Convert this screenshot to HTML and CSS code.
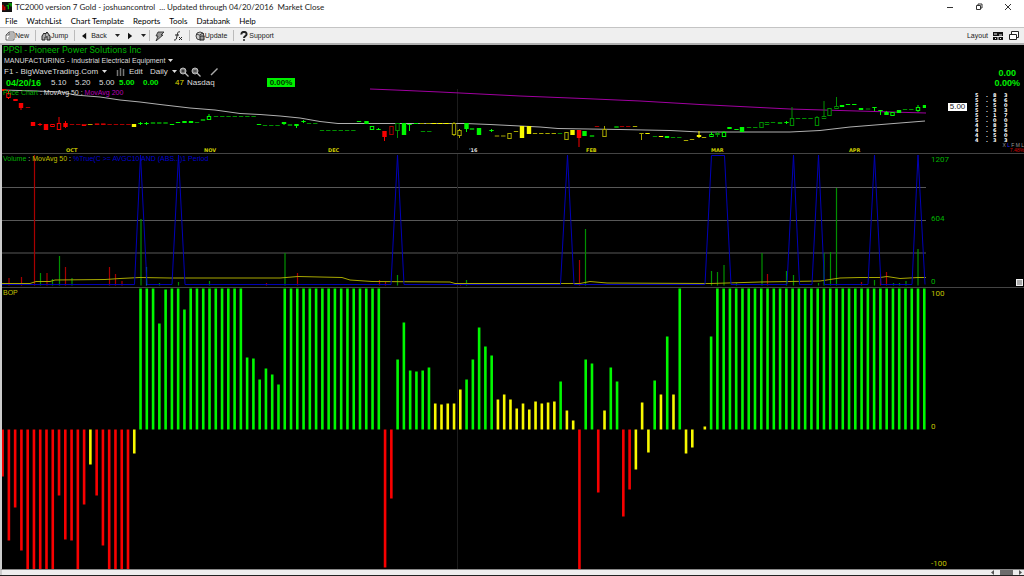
FILE: index.html
```html
<!DOCTYPE html>
<html lang="en">
<head>
<meta charset="utf-8">
<title>TC2000 version 7 Gold</title>
<link rel="stylesheet" href="styles.css">
</head>
<body>
<div class="app">
  <header class="titlebar">
    <svg class="logo" viewBox="0 0 11 11"><rect width="11" height="11" fill="#111"/><path d="M1 3v6M3 5v4" stroke="#e00" stroke-width="1.4"/><path d="M5 4h2v4M7 2h3v3" stroke="#0b0" stroke-width="1.4" fill="none"/></svg>
    <h1 class="title">TC2000 version 7 Gold - joshuancontrol &nbsp;... Updated through 04/20/2016 &nbsp;Market Close</h1>
    <div class="window-buttons">
      <button aria-label="Minimize"><svg viewBox="0 0 8 8"><path d="M1 4.5h6"/></svg></button>
      <button aria-label="Restore"><svg viewBox="0 0 8 8"><path d="M1.5 2.5h4v4h-4zM3 2.500V1h4v4H5.500"/></svg></button>
      <button aria-label="Close"><svg viewBox="0 0 8 8"><path d="M1 1l6 6M7 1L1 7"/></svg></button>
    </div>
  </header>
  <nav class="menu">
    <button>File</button><button>WatchList</button><button>Chart Template</button><button>Reports</button><button>Tools</button><button>Databank</button><button>Help</button>
  </nav>
  <div class="toolbar">
    <button class="group"><svg viewBox="0 0 10 10"><path d="M1 9V4l3-3h5v8zM4 1v3H1M4 3h4M4 5h4M3 7h5" fill="#fff" stroke="#444" stroke-width=".8"/></svg>New</button>
    <button class="group"><svg viewBox="0 0 10 10"><path d="M1 9V5l2-3 1 1 2-2 3 4v4H6V6H4v3z" fill="#aaa" stroke="#222"/><circle cx="6" cy="4" r="1.400" fill="#fff" stroke="#222" stroke-width=".7"/></svg>Jump</button>
    <div class="group history">
      <button class="back"><svg class="arrow" viewBox="0 0 6 8"><path d="M5 0v8L0 4z" fill="#111"/></svg>Back</button>
      <button aria-label="Back history"><svg class="caret" viewBox="0 0 5 3"><path d="M0 0h5L2.500 3z"/></svg></button>
      <button aria-label="Forward"><svg class="arrow" viewBox="0 0 6 8"><path d="M0 0v8L5 4z" fill="#111"/></svg></button>
      <button aria-label="Forward history"><svg class="caret" viewBox="0 0 5 3"><path d="M0 0h5L2.500 3z"/></svg></button>
    </div>
    <div class="group tools">
      <button aria-label="Draw"><svg viewBox="0 0 10 10"><path d="M3 1h6L6 4h2L1 10l2-5H1z" fill="#999" stroke="#222" stroke-width=".8"/></svg></button>
      <button aria-label="Formula"><svg viewBox="0 0 10 10"><path d="M7 1C5 0 4.500 2 4 5S3 9.500 1 9M2 4h4M6 6l3 3M9 6L6 9" fill="none" stroke="#222"/></svg></button>
    </div>
    <button class="group"><svg viewBox="0 0 10 10"><circle cx="5" cy="5" r="4" fill="#ccc" stroke="#444"/><path d="M1 4c2-2 3 1 4 0s2-2 4-1M5 5h4v4H5z" fill="#999" stroke="#222"/></svg>Update</button>
    <button class="group last"><svg viewBox="0 0 9 10"><path d="M2 3.500C1.500 0 7.500 0 7 3.500 7 5 4.500 5 4.500 7" fill="none" stroke="#222" stroke-width="2"/><circle cx="4.500" cy="9" r="1" fill="#222"/></svg>Support</button>
    <div class="layout-tools">
      <button>Layout <svg viewBox="0 0 10 8"><path d="M0 0h10v8H0z" fill="#111"/><path d="M0 4.500h10M5 4v4M1 2h3M6 3h3M2 6.500h1M7 6.500h1" stroke="#eee"/></svg></button>
      <button aria-label="Windows"><svg viewBox="0 0 10 10"><path d="M.5 3.500h7v5h-7zM2.500 3V.5h7v6h-2" fill="#fff" stroke="#222"/></svg></button>
    </div>
  </div>

  <main class="workspace">
    <section class="symbol">
      <div class="info">
        <h2 class="name">PPSI - Pioneer Power Solutions Inc</h2>
        <button class="sector">MANUFACTURING - Industrial Electrical Equipment <svg class="caret" viewBox="0 0 5 3"><path d="M0 0h5L2.500 3z"/></svg></button>
        <div class="controls">
          <button class="watch">F1 - BigWaveTrading.Com <svg class="caret" viewBox="0 0 5 3"><path d="M0 0h5L2.500 3z"/></svg></button>
          <button class="edit"><svg viewBox="0 0 9 8"><path d="M1.500 2v6M4.500 0v8M7.500 1v7" stroke="#777" stroke-width="1.500"/></svg>Edit</button>
          <button class="period">Daily <svg class="caret" viewBox="0 0 5 3"><path d="M0 0h5L2.500 3z"/></svg></button>
          <button aria-label="Zoom in"><svg class="lens" viewBox="0 0 10 10"><circle cx="4" cy="4" r="3" fill="#888" stroke="#bbb"/><path d="M2.500 4h3M4 2.500v3" stroke="#222"/><path d="M6 6l3.500 3.500" stroke="#bbb" stroke-width="1.300"/></svg></button>
          <button aria-label="Zoom out"><svg class="lens" viewBox="0 0 10 10"><circle cx="4" cy="4" r="3" fill="#888" stroke="#bbb"/><path d="M2.500 4h3" stroke="#222"/><path d="M6 6l3.500 3.500" stroke="#bbb" stroke-width="1.300"/></svg></button>
          <button class="pencil" aria-label="Draw line"><svg class="lens" viewBox="0 0 10 10"><path d="M2 8L8.500 1.500" stroke="#aaa" stroke-width="1.400"/></svg></button>
        </div>
        <div class="quote">
          <b class="date">04/20/16</b><span>5.10</span><span>5.20</span><span class="low">5.00</span><b>5.00</b><b>0.00</b><span class="rank">47</span><span class="market">Nasdaq</span><b class="badge">0.00%</b>
        </div>
      </div>
      <div class="change"><b>0.00</b><b>0.00%</b></div>
    </section>

    <section class="pane price">
      <div class="plot">
        <svg id="price" viewBox="2 88 924 65" preserveAspectRatio="none"></svg>
        <p class="legend"><span class="green">Price Chart</span> <span class="white">: MovAvg 50 :</span> <span class="magenta">MovAvg 200</span></p>
        <div class="months"><span>OCT</span><span>NOV</span><span>DEC</span><span class="year">'16</span><span>FEB</span><span>MAR</span><span>APR</span></div>
      </div>
      <div class="axis">
        <span class="tag">5.00</span>
        <div class="scale" id="scale"></div>
        <div class="modes"><span>X <i>L</i> F M L</span><span class="red">7.48%</span></div>
      </div>
    </section>

    <section class="pane volume">
      <div class="plot">
        <svg id="volume" viewBox="2 154 924 133" preserveAspectRatio="none"></svg>
        <p class="legend"><span class="green">Volume</span> <span class="white">:</span> <span class="yellow">MovAvg 50</span> <span class="white">:</span> <span class="blue">%True(C &gt;= AVGC10 AND (ABS...)1 Period</span></p>
      </div>
      <div class="axis levels green"><span>1207</span><span>604</span><span>0</span><button class="resize" aria-label="Resize pane"></button></div>
    </section>

    <section class="pane bop">
      <div class="plot">
        <svg id="bop" viewBox="2 288 924 281" preserveAspectRatio="none"></svg>
        <p class="legend yellow">BOP</p>
      </div>
      <div class="axis levels yellow"><span>100</span><span>0</span><span>-100</span></div>
    </section>
  </main>
  <footer class="scrollbar">
    <button aria-label="Scroll left"><svg viewBox="0 0 6 5"><path d="M4 0v5L1 2.500z"/></svg></button>
    <div class="thumb"></div>
    <button aria-label="Scroll right"><svg viewBox="0 0 6 5"><path d="M2 0v5l3-2.500z"/></svg></button>
  </footer>
</div>
<script src="chart.js"></script>
</body>
</html>
```
FILE: styles.css
```css
* { box-sizing: border-box; }
body { margin: 0; background: #000; font: 8px/10px "Liberation Sans", sans-serif; color: #222; }
h1, h2, p { margin: 0; font: inherit; }
button { border: 0; padding: 0; margin: 0; background: none; font: inherit; color: inherit; display: flex; align-items: center; white-space: nowrap; }
svg { display: block; }
.app { height: 100vh; display: flex; flex-direction: column; background: #fff; border-bottom: 1px solid #222; overflow: hidden; }
.titlebar { height: 14px; flex: none; display: flex; align-items: center; padding: 0 12px 0 2px; font-family: Lato, sans-serif; }
.logo { width: 10px; height: 10px; margin-right: 3px; }
.title { flex: 1; font-size: 8px; white-space: pre; }
.window-buttons { display: flex; gap: 21px; }
.window-buttons svg { width: 8px; height: 8px; fill: none; stroke: #333; stroke-width: 1; }
.menu { height: 13px; flex: none; display: flex; align-items: center; gap: 9px; padding-left: 5px; font-family: Lato, sans-serif; color: #000; }
.toolbar { height: 18px; flex: none; display: flex; align-items: center; padding: 0 5px; background: #efefef; border-top: 1px solid #c4c4c4; border-bottom: 2px solid #b0b0b0; font-size: 7px; }
.toolbar svg { width: 10px; height: 10px; }
.group { height: 11px; display: flex; align-items: center; padding-right: 6px; margin-right: 5px; border-right: 1px solid #bbb; }
.group.last { border: 0; }
.toolbar .arrow { width: 5px; height: 8px; }
.caret, .toolbar .caret { width: 5px; height: 3px; fill: currentColor; }
.back { gap: 4px; }
.history { gap: 8px; padding-left: 2px; padding-right: 3px; }
.tools { gap: 8px; }
.layout-tools { margin-left: auto; display: flex; align-items: center; gap: 6px; }
.layout-tools button { gap: 5px; }

.workspace { flex: 1; min-height: 0; display: flex; flex-direction: column; background: #000; border-left: 2px solid #ccc; }
.symbol { flex: none; height: 43px; display: flex; justify-content: space-between; color: #ddd; }
.info { padding-left: 1px; }
.name { font-family: Roboto, sans-serif; font-size: 9px; line-height: 10px; color: #00b000; }
.sector { height: 11px; gap: 3px; padding-left: 1px; font-size: 7px; }
.controls { height: 11px; display: flex; align-items: center; padding-left: 1px; font-size: 8px; gap: 2px; }
.controls button { gap: 4px; }
.watch { width: 110px; }
.edit svg { width: 9px; height: 8px; }
.edit { width: 32px; }
.lens { width: 10px; height: 10px; }
.controls .pencil { margin-left: 6px; }
.quote { height: 11px; display: flex; align-items: center; padding-left: 3px; }
.quote > * { width: 24px; }
.quote b { color: #00f000; font-size: 8px; }
.quote .date { width: 45px; font-size: 9px; }
.quote .low { width: 20px; }
.quote .rank { width: 12px; margin-left: 8px; color: #dd0; }
.quote .market { width: 80px; }
.quote .badge { width: 28px; line-height: 9px; text-align: center; background: #00f000; color: #030; }
.change { display: flex; flex-direction: column; align-items: center; padding: 23px 4px 0 0; font-size: 9px; color: #00f000; }

.pane { min-height: 0; display: flex; border-bottom: 1px solid #444; }
.price { flex: 65 1 0; }
.volume { flex: 133 1 0; }
.bop { flex: 281 1 0; border: 0; }
.plot { flex: 1; min-width: 0; position: relative; }
.plot svg { position: absolute; width: 100%; height: 100%; }
.axis { flex: none; width: 98px; position: relative; }
.legend { position: absolute; left: 1px; top: 0; font-size: 7px; line-height: 9px; white-space: nowrap; }
.green { color: #00b400; }
.white { color: #ddd; }
.magenta { color: #b800b8; }
.yellow { color: #c0c000; }
.blue { color: #0000d0; }
.red { color: #d00000; }
.months { position: absolute; left: 0; right: 0; bottom: 0; height: 6px; padding-left: 64px; display: grid; grid-template-columns: 138fr 124fr 141fr 117fr 125fr 138fr 77fr; font: bold 5px/6px "DejaVu Sans", sans-serif; color: #cc0; }
.months .year { color: #ddd; }
.price .axis { display: flex; justify-content: flex-end; }
.tag { position: absolute; left: 22px; top: 15px; width: 19px; background: #fff; color: #222; line-height: 8px; text-align: center; }
.scale { width: 38px; margin-right: 11px; padding-top: 5px; font: bold 5px/5px "DejaVu Sans", sans-serif; color: #fff; }
.scale div { display: grid; grid-template-columns: 11px 7px 11px 9px; }
.modes { position: absolute; right: 0; bottom: 0; text-align: right; font-size: 5px; line-height: 5px; color: #999; display: flex; flex-direction: column; }
.modes i { font-style: normal; color: #22f; }
.levels { display: flex; flex-direction: column; justify-content: space-between; padding: 1px 0 0 5px; font-family: Roboto, sans-serif; }
.levels span:nth-child(2) { padding-bottom: 5px; }
.resize { position: absolute; right: 1px; bottom: 1px; width: 7px; height: 7px; background: #aaa; border: 1px solid #eee; }

.scrollbar { flex: none; height: 6px; display: flex; justify-content: flex-end; align-items: stretch; gap: 4px; background: #eee; border-top: 1px solid #888; border-left: 2px solid #ccc; padding-right: 1px; }
.scrollbar svg { width: 6px; height: 5px; fill: #555; }
.thumb { width: 13px; background: #6c6c6c; }
```
FILE: chart.js
```js
const NS = "http://www.w3.org/2000/svg";
const G = "#00f800", DG = "#009000", R = "#f80000", DR = "#a80000", Y = "#f8f800", DY = "#a8a800";

function add(id, tag, attrs) {
  const el = document.createElementNS(NS, tag);
  for (const k in attrs) el.setAttribute(k, attrs[k]);
  document.getElementById(id).appendChild(el);
}
const rect = (id, x, y, width, height, fill) => add(id, "rect", { x, y, width, height, fill });
const line = (id, points, stroke, w = 1) => add(id, "polyline", { points, stroke, fill: "none", "stroke-width": w });

// Balance of power: one bar per session, g/r/y colour followed by signed length
const full = (n) => Array(n).fill("g141");
const bars = [
  ..."r-47 r-111 r-78 r-121 r-140 r-140 r-140 r-140 r-140 r-66 r-110 r-111 r-140 r-75 y-35 r-66 r-116 r-140 r-140 r-140 r-140 y-24".split(" "),
  ...full(3), "g106", "g140", ...full(2), "g120", ...full(9),
  ..."g72 g71 g50 g61 g55 g45".split(" "), ...full(16),
  ..."r-138 r-69 g70 g107 g59 g58 g59 g62 y26 y25 y26 y26 y40 g50 g70 g102 g83 g74 y30 y35 y30 y21 y26 y20 y28 y26 y27 y28 g48 y19 y9 r-140 g70 g66 r-63 y19 g62 g48 r-87 r-60 y-40 y27 y-23 g49 y35 g93 y35 g141 y-24 y-18 y0 y3 g93".split(" "),
  ...full(35)
];
line("bop", "457.5,288 457.5,569", "#1c1c1c");
bars.forEach((b, i) => {
  const v = +b.slice(1), x = 2.6 + 6.27 * i;
  rect("bop", x - 1.3, v > 0 ? 429.5 - v : 429.5, 2.6, Math.abs(v), { g: G, r: R, y: Y }[b[0]]);
});

// Volume
[187.5, 220.5, 253].forEach((y) => line("volume", `2,${y} 926,${y}`, "#585858"));
line("volume", "457.5,154 457.5,287", "#1c1c1c");
const vol = {
  [DR]: [[9,278],[21.5,277],[34.5,155],[47,273],[65.5,267],[109.5,267],[115.5,274],[122,281],[266.5,283],[297.5,273],[379.5,280],[385.5,282],[460.5,283],[579.5,260],[767.5,274],[861.5,282],[880.5,274],[886.5,272]],
  [DG]: [[40.5,273],[52.5,279],[59.5,256],[72,278],[141,219],[159.5,283],[178.5,282],[209.5,281],[285,253],[397.5,275],[466.5,280],[585.5,229],[711.5,271],[717.5,272],[724,265],[736.5,283],[762,253],[786.5,271],[793.5,275],[818.5,283],[824,253],[830.5,252],[836.500,188],[874.5,280],[893.5,283],[899.5,283],[906,281],[918,249]],
  "#008888": [[146.5,267]]
};
for (const c in vol) vol[c].forEach(([x, y]) => rect("volume", x - 0.6, y, 1.2, 285.5 - y, c));
line("volume", "2,283.5 30,283.5 36,281.5 50,281.5 55,280 105,279.5 120,278.500 140,277.5 170,278 280,278 298,276.5 342,277.5 350,280 372,281.5 450,282 455,283.5 580,283.500 590,281.5 607,283 711,283.5 760,282 820,281 840,278 860,277.500 880,277.5 887,276.5 900,278.5 918,277.5 926,277.5", "#a8a800");
line("volume", "2,284.5 134.5,284.5 140.5,155 147,284.5 172,284.500 178.5,155 185,284.5 391,284.5 397.5,155 404,284.5 560.5,284.5 567.5,155 574,284.5 705,284.5 711.5,155.5 724.5,155.5 731,284.5 787,284.5 793.5,155 799.500,284.5 812,284.5 818.500,155 824.5,284.5 868,284.5 874.5,155 881,284.5 912,284.5 918,155 925,284.5", "#0000b8");

// Price: [centre x, body top, body height, kind, colour, wick top, wick bottom]; kinds: s solid, h hollow
line("price", "457.5,89 457.5,150", "#1c1c1c");
line("price", "2,90 36,91 62,92 75,95 100,97 120,100 140,102 160,104.5 190,108 215,110 240,113.5 260,114.500 280,116 300,118 320,121.5 338,123.5 465,123.5 490,124.5 510,125.5 540,127 558,128.5 620,129.5 670,130.5 700,132 790,132 820,130.5 850,127 875,125 900,123 925,121", "#b0b0b0");
line("price", "370,89 395,90 440,92 470,93.5 520,96 583,98.5 640,101 700,104.5 790,109 840,110.5 926,113", "#a000a0");
const candles = [
  [4,89,2,"s",R],[8.5,93,4,"h",R,90,99],[15.5,99,2,"s",R],[21,103,5,"s",R,103,110],[33,122,4,"s",R],[40,124,1,"s",R,123,126],[46,124,6,"s",R],[52.5,124,2,"h",R],[59,123,6,"h",R,117,130],[65.5,123,4,"s",R,121,128],
  [84,124,2,"s",R],[134,124,3,"s",Y],[140.5,123,1,"s",G,122,125],[146.5,123,1,"s",G,122,125],[184.5,121,2,"s",G],[191,121,2,"s",G],[203,119,2,"s",DG],[209,116,3,"h",G,114,119],
  [284,122,2,"s",G,122,125],[296.5,124,2,"s",G,124,128],[303.5,121,1,"s",G,120,123],[259,124,1,"s",G],[359,121,1,"s",G],[366.5,121,3,"s",G],[372,126,3,"h",G],[378.5,129,1,"s",G,128,130],[384.5,131,6,"s",R,131,141],[391.5,126,8,"h",DR],[397.5,123,7,"h",DG,123,138],[404,123,12,"s",G],[409.5,124,1,"s",G,124,131],
  [454,123,11,"h",DY,122,136],[459.5,130,5,"h",DY,129,138],[466.500,123,6,"s",G,123,132],[472,128,2,"s",DG],[479,128,7,"s",G],[491.5,130,1,"s",G,129,132],[509.5,133,5,"h",DY],[522,126,12,"s",Y],[529,126,8,"s",Y],[566.5,132,7,"h",DY],[572.5,130,5,"s",Y],[579,130,8,"s",R,130,147],[584.500,131,5,"s",G],[592,135,2,"s",DG],[604.5,129,7,"h",DY,126,137],[616.5,126,2,"s",DG],
  [641.5,133,1,"s",DY,133,140],[647.5,133,1,"s",Y],[667,136,2,"s",G],[699,135,2,"s",Y,131,138],[711.5,134,2,"h",G,132,137],[717.5,133,2,"s",DG,132,137],[724,132,4,"h",G,131,137],[729.5,127,2,"s",G],[736.5,129,1,"s",G],[742,127,5,"s",G],[761.5,122,5,"h",DG],[767,122,2,"h",DG],[780,122,2,"s",DG],[786.5,122,1,"s",G,121,124],[792,118,7,"h",DG,107,125],[817,117,8,"h",DG,116,126],[824,116,2,"h",DG,101,118],[829.5,108,7,"h",DG],[836.5,106,2,"h",DG,97,108],[842,105,2,"s",G],[861,108,2,"s",G],[874.5,107,1,"s",G,107,111],[880.5,110,1,"s",G,110,115],[886.5,112,3,"s",G,111,115],[892.500,112,3,"h",G],[899,110,3,"s",G],[918,107,3,"h",G,105,112],[925,105,3,"s",G]
];
candles.forEach(([x, y, h, kind, c, a, b]) => {
  if (b) rect("price", x - 0.5, a, 1, b - a, c);
  if (kind === "s") rect("price", x - 2.2, y, 4.4, h, c);
  else add("price", "rect", { x: x - 1.7, y: y + 0.5, width: 3.4, height: h, fill: "#000", stroke: c });
});
// Sessions without a range are drawn as flat ticks: [first x, last x, y, colour]
[[28,28,107.5,DR],[72,128,124.5,DR],[90,90,124.5,DY],[97,108,124,R],[153,166,123,G],[172,172,124.5,G],[178,178,122.5,G],[197,197,122.500,DG],[216,253,116.5,DG],[265,278,125.5,DG],[290,290,125,G],[309,316,123.5,DG],[322,354,130.5,DG],[416,416,123.5,G],[422,447,123.5,DY],[434,447,123.5,Y],[423,430,131.5,DG],[497,504,136,DY],[516,516,131.5,DY],[535,556,133.5,DY],[560,560,133.5,DG],[597,597,126.5,DR],[622,629,126.5,DR],[635,635,126.5,DY],[655,655,136.5,DG],[661,661,136.5,Y],[673,680,137.5,DG],[686,686,140.5,DY],[692,692,139.5,DY],[704,704,137.5,DY],[749,755,127.5,DG],[773,773,122.5,DG],[798,812,118.5,DG],[848,854,104.5,G],[868,868,109,DG],[905,912,109.5,DG]].forEach(([a, b, y, c]) => {
  for (let x = a; x <= b + 1; x += 6.27) rect("price", x - 2.2, y - 0.5, 4.4, 1, c);
});

["5.83", "5.66", "5.50", "5.33", "5.17", "5.00", "4.83", "4.66", "4.50", "4.33"].forEach((p) => {
  const row = document.createElement("div");
  for (const ch of p) {
    const s = document.createElement("span");
    s.textContent = ch;
    row.appendChild(s);
  }
  document.getElementById("scale").appendChild(row);
});
```
